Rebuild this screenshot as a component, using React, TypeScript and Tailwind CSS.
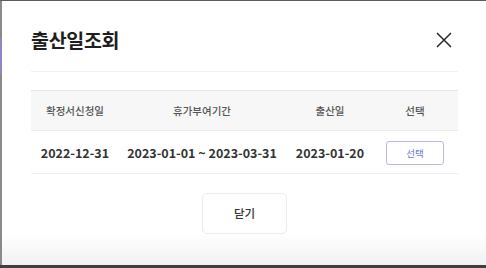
const font = { fontFamily: '"Noto Sans CJK KR", "Noto Sans", sans-serif' };

const cols = "grid grid-cols-[88px_166px_90px_80px_1fr]";

function CloseIcon() {
  return (
    <svg width="16" height="16" viewBox="0 0 16 16" className="mr-[6px] text-[#2a2a2a]">
      <path d="M1 1L15 15M15 1L1 15" stroke="currentColor" strokeWidth="1.5" fill="none" />
    </svg>
  );
}

export default function App() {
  return (
    <div
      className="flex h-[268px] w-[486px] flex-col overflow-hidden border-t border-b-[3px] border-t-[#5c5c5c] border-b-[#3f3f3f] bg-white text-[#222]"
      style={font}
    >
      <div className="flex flex-1">
        {/* left edge of the page behind the modal */}
        <div className="flex w-[2px] flex-col">
          <div className="h-[37px] bg-[#8a8a8a]" />
          <div className="h-[36px] bg-[#8c86c4]" />
          <div className="flex-1 bg-[#8a8a8a]" />
        </div>

        <div className="flex flex-1 flex-col">
          <div className="flex flex-col pl-[29px] pr-[28px]">
            <div className="flex h-[71px] items-center justify-between border-b border-[#f1f1f1] pt-[7px]">
              <h1 className="text-[19.5px] font-bold tracking-[-0.3px] text-[#1e1e1e]">
                출산일조회
              </h1>
              <CloseIcon />
            </div>

            <div className={`${cols} mt-[18px] h-[40px] items-center border-t border-[#e6e6e6] bg-[#f7f7f7] text-[10.5px] font-medium text-[#555]`}>
              <div className="text-center">확정서신청일</div>
              <div className="text-center">휴가부여기간</div>
              <div className="text-center">출산일</div>
              <div className="text-center">선택</div>
              <div />
            </div>

            <div className={`${cols} h-[44px] items-center border-t border-b border-t-[#ececec] border-b-[#efefef] pt-[2px] text-[12.5px] font-bold text-[#333]`}>
              <div className="text-center">2022-12-31</div>
              <div className="text-center">2023-01-01 ~ 2023-03-31</div>
              <div className="text-center">2023-01-20</div>
              <div className="flex justify-center">
                <button className="flex h-[24px] w-[58px] items-center justify-center rounded-[3px] border border-[#b3b9ec] bg-white text-[9.5px] font-normal text-[#6f7dd6]">
                  선택
                </button>
              </div>
              <div />
            </div>

            <div className="mt-[19px] flex justify-center">
              <button className="flex h-[41px] w-[85px] items-center justify-center rounded-[5px] border border-[#ececec] bg-white text-[11.5px] font-medium text-[#333]">
                닫기
              </button>
            </div>
          </div>

          <div className="flex-1 bg-gradient-to-b from-white to-[#f1f1f1]" />
        </div>
      </div>
    </div>
  );
}
